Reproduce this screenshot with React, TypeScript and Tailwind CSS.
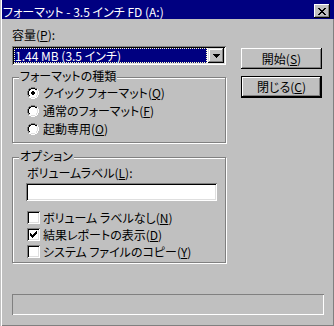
import React from "react";

type Palette = Record<string, string>;

function PixelArt({ rows, palette, className }: { rows: string[]; palette: Palette; className?: string }) {
  const w = rows[0].length;
  const h = rows.length;
  const paths: Record<string, string> = {};
  rows.forEach((r, y) => {
    for (let x = 0; x < r.length; x++) {
      const c = r[x];
      if (palette[c]) {
        paths[c] = (paths[c] || "") + `M${x} ${y}h1v1h-1z`;
      }
    }
  });
  return (
    <svg width={w} height={h} viewBox={`0 0 ${w} ${h}`} shapeRendering="crispEdges" className={className}>
      {Object.keys(paths).map((k) => (
        <path key={k} d={paths[k]} fill={palette[k]} />
      ))}
    </svg>
  );
}

const closeX = [
  "xx....xx",
  ".xx..xx.",
  "..xxxx..",
  "...xx...",
  "..xxxx..",
  ".xx..xx.",
  "xx....xx",
];

const arrow = ["xxxxxxx", ".xxxxx.", "..xxx..", "...x..."];

const check = [
  "......x",
  ".....xx",
  "x...xxx",
  "xx.xxx.",
  "xxxxx..",
  ".xxx...",
  "..x....",
];

const radioOff = [
  "....gggg....",
  "..ggkkkkgg..",
  ".gkkWWWWkkw.",
  ".gkWWWWWWlw.",
  "gkWWWWWWWWlw",
  "gkWWWWWWWWlw",
  "gkWWWWWWWWlw",
  "gkWWWWWWWWlw",
  ".gkWWWWWWlw.",
  ".glWWWWWWlw.",
  "..wwllllww..",
  "....wwww....",
];

const radioOn = [
  "....gggg....",
  "..ggkkkkgg..",
  ".gkkWWWWkkw.",
  ".gkWWWWWWlw.",
  "gkWWWddWWWlw",
  "gkWWddddWWlw",
  "gkWWddddWWlw",
  "gkWWWddWWWlw",
  ".gkWWWWWWlw.",
  ".glWWWWWWlw.",
  "..wwllllww..",
  "....wwww....",
];

const radioPalette: Palette = {
  g: "#808080",
  k: "#000000",
  W: "#ffffff",
  w: "#ffffff",
  l: "#dfdfdf",
  d: "#000000",
};

function Radio({ on, children }: { on?: boolean; children: React.ReactNode }) {
  return (
    <div className="h-[18px] flex items-center gap-[4px]">
      <PixelArt rows={on ? radioOn : radioOff} palette={radioPalette} />
      <span className="whitespace-nowrap">{children}</span>
    </div>
  );
}

function Check({ on, children }: { on?: boolean; children: React.ReactNode }) {
  return (
    <div className="h-[17px] flex items-center gap-[3px]">
      <div className="w-[13px] h-[13px] bg-white flex items-center justify-center shadow-[inset_1px_1px_0_#808080,inset_-1px_-1px_0_#fff,inset_2px_2px_0_#000,inset_-2px_-2px_0_#dfdfdf]">
        {on ? <PixelArt rows={check} palette={{ x: "#000" }} /> : null}
      </div>
      <span className="whitespace-nowrap">{children}</span>
    </div>
  );
}

export default function App() {
  return (
    <div className="w-[334px] h-[326px] bg-[#c0c0c0] flex flex-col overflow-hidden text-black text-[12px] leading-[14px] font-['Noto_Sans_CJK_JP',sans-serif] [font-feature-settings:'palt'] shadow-[inset_1px_0_0_#c0c0c0,inset_2px_0_0_#fff,inset_-1px_-1px_0_#808080]">
      {/* Title bar */}
      <div className="ml-[2px] h-[19px] shrink-0 bg-[#000080] flex items-start justify-between">
        <div className="pl-[1px] pt-[5px] text-white whitespace-nowrap">フォーマット - 3.5 インチ FD (A:)</div>
        <div className="mt-[4px] mr-[4px] w-[16px] h-[14px] bg-[#c0c0c0] flex items-center justify-center shadow-[inset_-1px_-1px_0_#000,inset_1px_1px_0_#fff,inset_-2px_-2px_0_#808080]">
          <PixelArt rows={closeX} palette={{ x: "#000" }} />
        </div>
      </div>

      {/* Body */}
      <div className="flex items-start">
        <div className="ml-[12px] w-[214px] flex flex-col">
          <div className="mt-[9px] h-[14px] whitespace-nowrap">
            容量(<span className="underline">P</span>):
          </div>
          <div className="mt-[4px] h-[19px] bg-white p-[2px] flex shadow-[inset_1px_1px_0_#808080,inset_-1px_-1px_0_#fff,inset_2px_2px_0_#000,inset_-2px_-2px_0_#dfdfdf]">
            <div className="flex-1 mr-[1px] bg-[#000080] text-white border border-dotted border-[#ffffc0] leading-[13px] whitespace-nowrap">
              1.44 MB (3.5 インチ)
            </div>
            <div className="w-[16px] bg-[#c0c0c0] flex items-center justify-center shadow-[inset_-1px_-1px_0_#000,inset_1px_1px_0_#dfdfdf,inset_-2px_-2px_0_#808080,inset_2px_2px_0_#fff]">
              <PixelArt rows={arrow} palette={{ x: "#000" }} />
            </div>
          </div>

          {/* Group 1 */}
          <div className="relative mt-[12px] h-[66px] border border-[#808080] shadow-[1px_1px_0_#fff,inset_1px_1px_0_#fff]">
            <div className="absolute left-[6px] -top-[9px] px-[1px] bg-[#c0c0c0] whitespace-nowrap">フォーマットの種類</div>
            <div className="pt-[6px] pl-[14px] flex flex-col">
              <Radio on>
                クイック フォーマット(<span className="underline">Q</span>)
              </Radio>
              <Radio>
                通常のフォーマット(<span className="underline">F</span>)
              </Radio>
              <Radio>
                起動専用(<span className="underline">O</span>)
              </Radio>
            </div>
          </div>

          {/* Group 2 */}
          <div className="relative mt-[14px] h-[106px] border border-[#808080] shadow-[1px_1px_0_#fff,inset_1px_1px_0_#fff]">
            <div className="absolute left-[6px] -top-[9px] px-[1px] bg-[#c0c0c0] whitespace-nowrap">オプション</div>
            <div className="pt-[8px] pl-[14px] flex flex-col">
              <div className="h-[14px] whitespace-nowrap">
                ボリュームラベル(<span className="underline">L</span>):
              </div>
              <div className="mt-[3px] -ml-[1px] w-[191px] h-[18px] bg-white shadow-[inset_1px_1px_0_#808080,inset_-1px_-1px_0_#fff,inset_2px_2px_0_#000,inset_-2px_-2px_0_#dfdfdf]" />
              <div className="mt-[8px] flex flex-col">
                <Check>
                  ボリューム ラベルなし(<span className="underline">N</span>)
                </Check>
                <Check on>
                  結果レポートの表示(<span className="underline">D</span>)
                </Check>
                <Check>
                  システム ファイルのコピー(<span className="underline">Y</span>)
                </Check>
              </div>
            </div>
          </div>
        </div>

        {/* Buttons */}
        <div className="ml-[15px] flex flex-col">
          <div className="mt-[29px] w-[81px] h-[21px] bg-[#c0c0c0] flex items-center justify-center whitespace-nowrap shadow-[inset_-1px_-1px_0_#000,inset_1px_1px_0_#fff,inset_-2px_-2px_0_#808080]">
            開始(<span className="underline">S</span>)
          </div>
          <div className="mt-[7px] w-[81px] h-[22px] bg-[#c0c0c0] flex items-center justify-center whitespace-nowrap shadow-[inset_0_0_0_1px_#000,inset_-2px_-2px_0_#000,inset_2px_2px_0_#fff,inset_-3px_-3px_0_#808080]">
            閉じる(<span className="underline">C</span>)
          </div>
        </div>
      </div>

      {/* Status bar */}
      <div className="mt-[31px] ml-[12px] w-[312px] h-[21px] shrink-0 shadow-[inset_1px_1px_0_#808080,inset_-1px_-1px_0_#fff]" />
    </div>
  );
}
